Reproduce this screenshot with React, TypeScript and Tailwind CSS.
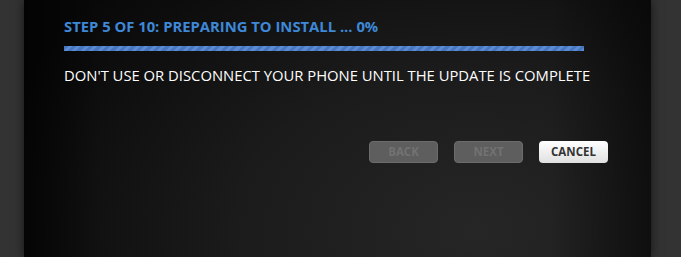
function StepButton({ label, disabled }: { label: string; disabled?: boolean }) {
  if (disabled) {
    return (
      <button
        disabled
        className="w-[69px] h-[22px] rounded-[4px] border border-[#6c6c6c] bg-[#5e5e5e] text-[11.5px] font-bold text-[#727272] leading-none"
      >
        {label}
      </button>
    );
  }
  return (
    <button className="w-[69px] h-[22px] rounded-[4px] bg-[linear-gradient(to_bottom,#ffffff,#e0e0e0)] text-[11.5px] font-bold text-[#333] leading-none">
      {label}
    </button>
  );
}

export default function App() {
  return (
    <div className="w-[681px] h-[257px] bg-[#333333] pl-[24px] overflow-hidden font-['Open_Sans',sans-serif]">
      <div className="w-[627px] h-full shadow-[0_0_10px_rgba(0,0,0,0.6)] bg-[linear-gradient(to_right,rgba(0,0,0,0.6)_0%,transparent_12%,transparent_84%,rgba(0,0,0,0.5)_100%),radial-gradient(ellipse_95%_160%_at_72%_90%,#262626_0%,#1b1b1b_40%,#080808_85%)] pt-[16px] pl-[40px]">
        <h1 className="text-[14.8px] font-bold text-[#3e88d8] leading-[20px]">
          STEP 5 OF 10: PREPARING TO INSTALL ... 0%
        </h1>
        <div className="mt-[10px] w-[520px] h-[5px] bg-[repeating-linear-gradient(135deg,#4877c0_0px,#4877c0_3px,#5b8bd2_3px,#5b8bd2_6px)]" />
        <p className="mt-[14px] text-[14.8px] text-white leading-[20px]">
          DON'T USE OR DISCONNECT YOUR PHONE UNTIL THE UPDATE IS COMPLETE
        </p>
        <div className="mt-[56px] w-[544px] flex justify-end gap-[16px]">
          <StepButton label="BACK" disabled />
          <StepButton label="NEXT" disabled />
          <StepButton label="CANCEL" />
        </div>
      </div>
    </div>
  );
}
